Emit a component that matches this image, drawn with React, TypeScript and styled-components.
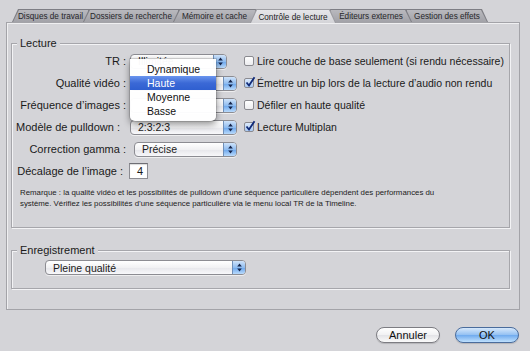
import styled, { createGlobalStyle } from "styled-components";

const Global = createGlobalStyle`
  html, body {
    margin: 0;
    padding: 0;
    background: #d4d4d8;
  }
  body {
    font-family: "Liberation Sans", "DejaVu Sans", sans-serif;
    color: #1a1a1a;
  }
`;

const Window = styled.div`
  width: 530px;
  height: 351px;
  padding-top: 9px;
  box-sizing: border-box;
  background: #d4d4d8;
  overflow: hidden;
`;

const TabBar = styled.div`
  display: flex;
  align-items: flex-start;
  margin-left: 12px;
  height: 14px;
  position: relative;
  z-index: 2;
`;

type Side = "left" | "right" | "active";

const shapes: Record<Side, string> = {
  left: "polygon(0 100%, 6px 0, 100% 0, 100% 100%)",
  right: "polygon(0 0, calc(100% - 6px) 0, 100% 100%, 0 100%)",
  active: "polygon(0 100%, 6px 0, calc(100% - 6px) 0, 100% 100%)",
};

const Tab = styled.div<{ $side: Side; $w: number; $z: number }>`
  width: ${(p) => p.$w}px;
  height: ${(p) => (p.$side === "active" ? 14 : 13)}px;
  margin-left: -6px;
  &:first-child {
    margin-left: 0;
  }
  position: relative;
  z-index: ${(p) => p.$z};
  clip-path: ${(p) => shapes[p.$side]};
  background: ${(p) => (p.$side === "active" ? "#9d9da2" : "#7e7e84")};
  padding: 1px 1px 0 1px;
  box-sizing: border-box;
`;

const TabFace = styled.div<{ $side: Side }>`
  height: 100%;
  clip-path: ${(p) => shapes[p.$side]};
  background: ${(p) =>
    p.$side === "active"
      ? "linear-gradient(#e6e6e9, #d4d4d8)"
      : "linear-gradient(#b9b9be, #a2a2a8)"};
  display: flex;
  align-items: center;
  justify-content: center;
  font-size: 8.2px;
  color: ${(p) => (p.$side === "active" ? "#222" : "#26262a")};
  white-space: nowrap;
  padding-top: 1px;
  box-sizing: border-box;
`;

const Panel = styled.div`
  margin: -1px 0 0 6px;
  width: 514px;
  height: 288px;
  box-sizing: border-box;
  border: 1px solid #a3a3a8;
  box-shadow: inset 1px 1px 0 #efeff1;
  padding: 20px 9px 0 4px;
  display: flex;
  flex-direction: column;
  position: relative;
  z-index: 1;
`;

const Group = styled.div<{ $h: number; $mt?: number }>`
  position: relative;
  height: ${(p) => p.$h}px;
  margin-top: ${(p) => p.$mt ?? 0}px;
  border: 1px solid #a6a6ab;
  box-shadow: 1px 1px 0 #f3f3f5, inset 1px 1px 0 #f3f3f5;
  box-sizing: border-box;
  display: flex;
  flex-direction: column;
`;

const Legend = styled.div`
  align-self: flex-start;
  margin: -7px 0 0 5px;
  padding: 0 3px;
  background: #d4d4d8;
  font-size: 11px;
  line-height: 13px;
  color: #1a1a1a;
`;

const Columns = styled.div`
  display: flex;
`;

const FormCol = styled.div`
  width: 231px;
  display: flex;
  flex-direction: column;
`;

const Row = styled.div`
  height: 22px;
  display: flex;
  align-items: center;
`;

const Label = styled.div<{ $end?: number }>`
  width: 114px;
  padding-right: ${(p) => p.$end ?? 0}px;
  box-sizing: border-box;
  text-align: right;
  font-size: 11px;
  white-space: nowrap;
  margin-right: 4px;
`;

const Select = styled.div<{ $w: number; $ml?: number }>`
  width: ${(p) => p.$w}px;
  margin-left: ${(p) => p.$ml ?? 0}px;
  height: 15px;
  box-sizing: border-box;
  border: 1px solid #8c8c92;
  border-radius: 4px;
  background: linear-gradient(#ffffff, #f1f1f3 50%, #e6e6ea 51%, #f8f8fa);
  display: flex;
  align-items: center;
  font-size: 10.5px;
  overflow: hidden;
  box-shadow: 0 1px 0 rgba(255, 255, 255, 0.6);
`;

const SelectText = styled.span`
  flex: 1;
  padding-left: 7px;
  white-space: nowrap;
  overflow: hidden;
`;

const Stepper = styled.div`
  width: 12px;
  height: 100%;
  border-left: 1px solid #6f8fb8;
  background: linear-gradient(#cfe3fa, #8fbcf0 50%, #6aa5ec 51%, #b9dafb);
  display: flex;
  align-items: center;
  justify-content: center;
`;

const Arrows = () => (
  <svg width="5" height="9" viewBox="0 0 5 9">
    <path d="M2.5 0.5 L4.8 3.5 L0.2 3.5 Z" fill="#15244a" />
    <path d="M2.5 8.5 L4.8 5.5 L0.2 5.5 Z" fill="#15244a" />
  </svg>
);

const Popup = ({ value, w, ml }: { value?: string; w: number; ml?: number }) => (
  <Select $w={w} $ml={ml}>
    <SelectText>{value}</SelectText>
    <Stepper>
      <Arrows />
    </Stepper>
  </Select>
);

const NumField = styled.div`
  width: 19px;
  height: 16px;
  margin-left: -1px;
  box-sizing: border-box;
  border: 1px solid #8c8c92;
  border-top-color: #6e6e74;
  background: #fff;
  box-shadow: inset 0 1px 1px rgba(0, 0, 0, 0.15);
  font-size: 11px;
  text-align: right;
  padding-right: 4px;
  line-height: 14px;
`;

const ChecksCol = styled.div`
  display: flex;
  flex-direction: column;
  padding-left: 1px;
`;

const Check = styled.div`
  height: 22px;
  display: flex;
  align-items: center;
  gap: 3px;
  font-size: 10.5px;
  white-space: nowrap;
`;

const Box = styled.span<{ $on: boolean }>`
  width: 10px;
  height: 10px;
  box-sizing: border-box;
  border: 1px solid #8a8a90;
  border-radius: 2px;
  background: ${(p) =>
    p.$on
      ? "linear-gradient(#dbe9fb, #a9c9f2)"
      : "linear-gradient(#ffffff, #ececef)"};
  position: relative;
  flex-shrink: 0;
`;

const Tick = styled.svg`
  position: absolute;
  left: 0px;
  top: -3px;
`;

const CheckItem = ({ on, children }: { on: boolean; children: string }) => (
  <Check>
    <Box $on={on}>
      {on && (
        <Tick width="11" height="11" viewBox="0 0 11 11">
          <path
            d="M1.5 6.5 L4 9.5 L9.5 1.2"
            stroke="#102a78"
            strokeWidth="1.8"
            fill="none"
          />
        </Tick>
      )}
    </Box>
    {children}
  </Check>
);

const Note = styled.p`
  margin: 5px 0 0 8px;
  font-size: 7.85px;
  line-height: 11px;
  color: #222;
  width: 480px;
  white-space: nowrap;
`;

const Menu = styled.div`
  position: absolute;
  left: 118px;
  top: 15px;
  width: 86px;
  padding: 3px 0 3px;
  background: rgba(255, 255, 255, 0.97);
  border-radius: 0 0 5px 5px;
  box-shadow: 0 3px 7px rgba(0, 0, 0, 0.45), 0 0 0 1px rgba(0, 0, 0, 0.12);
  z-index: 5;
`;

const MenuItem = styled.div<{ $hl?: boolean }>`
  height: 14px;
  line-height: 14px;
  padding-left: 17px;
  font-size: 10.5px;
  color: ${(p) => (p.$hl ? "#fff" : "#111")};
  background: ${(p) =>
    p.$hl ? "linear-gradient(#6a95ee, #3b69d6 50%, #2f5fd0)" : "transparent"};
`;

const RecordRow = styled.div`
  margin: 3px 0 0 33px;
`;

const Buttons = styled.div`
  display: flex;
  justify-content: flex-end;
  gap: 15px;
  margin: 17px 11px 0 0;
`;

const Button = styled.div<{ $primary?: boolean }>`
  width: 64px;
  height: 16px;
  box-sizing: border-box;
  border-radius: 8px;
  border: 1px solid ${(p) => (p.$primary ? "#4a6c9c" : "#7c7c82")};
  background: ${(p) =>
    p.$primary
      ? "linear-gradient(#d6e8fb, #93c0f2 50%, #6faaee 51%, #bfe0fd)"
      : "linear-gradient(#ffffff, #f1f1f3 50%, #e3e3e7 51%, #fafafa)"};
  font-size: 11px;
  display: flex;
  align-items: center;
  justify-content: center;
  color: #111;
  box-shadow: 0 1px 1px rgba(0, 0, 0, 0.15);
`;

const tabs: { label: string; side: Side; w: number; z: number }[] = [
  { label: "Disques de travail", side: "left", w: 77, z: 1 },
  { label: "Dossiers de recherche", side: "left", w: 96, z: 2 },
  { label: "Mémoire et cache", side: "left", w: 83, z: 3 },
  { label: "Contrôle de lecture", side: "active", w: 86, z: 6 },
  { label: "Éditeurs externes", side: "right", w: 82, z: 5 },
  { label: "Gestion des effets", side: "right", w: 82, z: 4 },
];

export default function App() {
  return (
    <Window>
      <Global />
      <TabBar>
        {tabs.map((t) => (
          <Tab key={t.label} $side={t.side} $w={t.w} $z={t.z}>
            <TabFace $side={t.side}>{t.label}</TabFace>
          </Tab>
        ))}
      </TabBar>
      <Panel>
        <Group $h={185}>
          <Legend>Lecture</Legend>
          <Columns>
            <FormCol>
              <Row>
                <Label>TR :</Label>
                <Popup value="Illimitée" w={97} />
              </Row>
              <Row>
                <Label>Qualité vidéo :</Label>
                <Popup w={107} />
              </Row>
              <Row>
                <Label>Fréquence d’images :</Label>
                <Popup w={107} />
              </Row>
              <Row>
                <Label $end={6}>Modèle de pulldown :</Label>
                <Popup value="2:3:2:3" w={107} />
              </Row>
              <Row>
                <Label>Correction gamma :</Label>
                <Popup value="Précise" w={103} ml={4} />
              </Row>
              <Row>
                <Label $end={3}>Décalage de l’image :</Label>
                <NumField>4</NumField>
              </Row>
            </FormCol>
            <ChecksCol>
              <CheckItem on={false}>
                Lire couche de base seulement (si rendu nécessaire)
              </CheckItem>
              <CheckItem on={true}>
                Émettre un bip lors de la lecture d’audio non rendu
              </CheckItem>
              <CheckItem on={false}>Défiler en haute qualité</CheckItem>
              <CheckItem on={true}>Lecture Multiplan</CheckItem>
            </ChecksCol>
          </Columns>
          <Note>
            Remarque : la qualité vidéo et les possibilités de pulldown d’une
            séquence particulière dépendent des performances du
            <br />
            système. Vérifiez les possibilités d’une séquence particulière via
            le menu local TR de la Timeline.
          </Note>
          <Menu>
            <MenuItem>Dynamique</MenuItem>
            <MenuItem $hl>Haute</MenuItem>
            <MenuItem>Moyenne</MenuItem>
            <MenuItem>Basse</MenuItem>
          </Menu>
        </Group>
        <Group $h={39} $mt={22}>
          <Legend>Enregistrement</Legend>
          <RecordRow>
            <Popup value="Pleine qualité" w={201} />
          </RecordRow>
        </Group>
      </Panel>
      <Buttons>
        <Button>Annuler</Button>
        <Button $primary>OK</Button>
      </Buttons>
    </Window>
  );
}
